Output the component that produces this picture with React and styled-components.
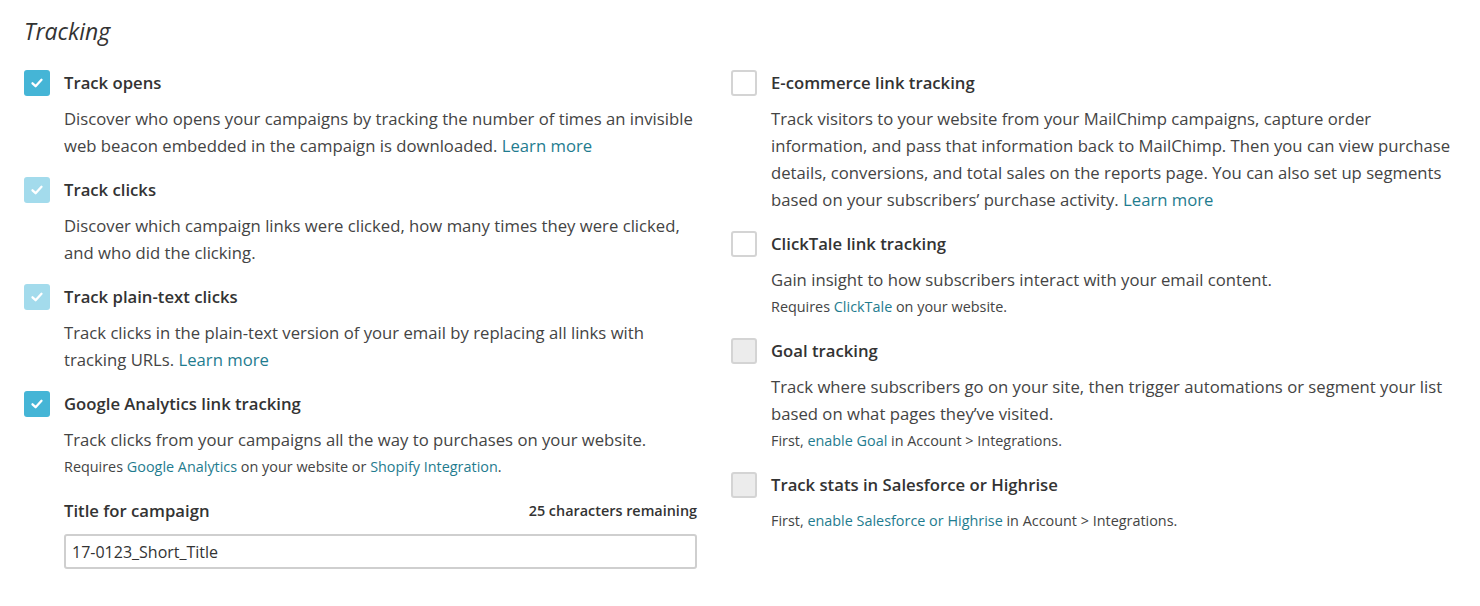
import React from 'react';
import styled, { createGlobalStyle } from 'styled-components';

const GlobalStyle = createGlobalStyle`
  body {
    margin: 0;
    background: #fff;
    font-family: "Open Sans", "Noto Sans", sans-serif;
    color: #333;
  }
`

const Page = styled.div`
  width: 1480px;
  height: 606px;
  padding: 15px 24px 0 24px;
  box-sizing: border-box;
`

const Heading = styled.h2`
  margin: 0;
  font-size: 23px;
  line-height: 33px;
  font-style: italic;
  font-weight: 400;
  color: #333;
`

const Columns = styled.div`
  display: grid;
  grid-template-columns: 673px 727px;
  column-gap: 34px;
  margin-top: 22px;
`

const Column = styled.div`
  display: flex;
  flex-direction: column;
  gap: 18px;
`

const Option = styled.div`
  display: grid;
  grid-template-columns: 40px 1fr;
`

const Box = styled.span`
  width: 26px;
  height: 26px;
  box-sizing: border-box;
  border-radius: 3px;
  display: flex;
  align-items: center;
  justify-content: center;
  background: ${p => p.$state === 'on' ? '#45b5d6' : p.$state === 'locked' ? '#a3dbec' : p.$state === 'off' ? '#fff' : '#ececec'};
  border: ${p => p.$state === 'on' || p.$state === 'locked' ? 'none' : '2px solid #d4d4d4'};
`

const Label = styled.div`
  font-size: 16.7px;
  font-weight: 600;
  line-height: 26px;
  color: #333;
`

const Body = styled.div`
  grid-column: 2;
  margin-top: 9px;
`

const Text = styled.p`
  margin: 0;
  font-size: 16.7px;
  line-height: 27px;
  color: #444;
`

const Note = styled.p`
  margin: 0;
  font-size: 14.4px;
  line-height: 27px;
  color: #444;
`

const A = styled.a`
  color: #1f7c8f;
  text-decoration: none;
`

const Field = styled.div`
  grid-column: 2;
  margin-top: 17px;
`

const FieldHead = styled.div`
  display: flex;
  justify-content: space-between;
  align-items: center;
  height: 26px;
`

const FieldLabel = styled.label`
  font-size: 16.7px;
  font-weight: 600;
  color: #333;
`

const Counter = styled.span`
  font-size: 14.4px;
  font-weight: 600;
  color: #333;
`

const Input = styled.input`
  display: block;
  width: 100%;
  height: 35px;
  margin-top: 11px;
  box-sizing: border-box;
  border: 2px solid #cfcfcf;
  border-radius: 3px;
  padding: 0 6px;
  font-family: "Open Sans", sans-serif;
  font-size: 16px;
  color: #333;
  outline: none;
`

const Check = () => (
  <svg width="14" height="14" viewBox="0 0 14 14">
    <path d="M2.5 7.3 L5.6 10.2 L11.5 3.8" fill="none" stroke="#fff" strokeWidth="2.3" strokeLinecap="round" strokeLinejoin="round" />
  </svg>
)

const Item = ({ state, label, children, extra }) => (
  <Option>
    <Box $state={state}>{(state === 'on' || state === 'locked') && <Check />}</Box>
    <Label>{label}</Label>
    {children && <Body>{children}</Body>}
    {extra}
  </Option>
)

export default function App() {
  return (
    <Page>
      <GlobalStyle />
      <Heading>Tracking</Heading>
      <Columns>
        <Column>
          <Item state="on" label="Track opens">
            <Text>Discover who opens your campaigns by tracking the number of times an invisible web beacon embedded in the campaign is downloaded. <A href="#">Learn more</A></Text>
          </Item>
          <Item state="locked" label="Track clicks">
            <Text>Discover which campaign links were clicked, how many times they were clicked, and who did the clicking.</Text>
          </Item>
          <Item state="locked" label="Track plain-text clicks">
            <Text>Track clicks in the plain-text version of your email by replacing all links with tracking URLs. <A href="#">Learn more</A></Text>
          </Item>
          <Item
            state="on"
            label="Google Analytics link tracking"
            extra={
              <Field>
                <FieldHead>
                  <FieldLabel>Title for campaign</FieldLabel>
                  <Counter>25 characters remaining</Counter>
                </FieldHead>
                <Input defaultValue="17-0123_Short_Title" />
              </Field>
            }
          >
            <Text>Track clicks from your campaigns all the way to purchases on your website.</Text>
            <Note>Requires <A href="#">Google Analytics</A> on your website or <A href="#">Shopify Integration</A>.</Note>
          </Item>
        </Column>
        <Column>
          <Item state="off" label="E-commerce link tracking">
            <Text>Track visitors to your website from your MailChimp campaigns, capture order information, and pass that information back to MailChimp. Then you can view purchase details, conversions, and total sales on the reports page. You can also set up segments based on your subscribers’ purchase activity. <A href="#">Learn more</A></Text>
          </Item>
          <Item state="off" label="ClickTale link tracking">
            <Text>Gain insight to how subscribers interact with your email content.</Text>
            <Note>Requires <A href="#">ClickTale</A> on your website.</Note>
          </Item>
          <Item state="disabled" label="Goal tracking">
            <Text>Track where subscribers go on your site, then trigger automations or segment your list based on what pages they’ve visited.</Text>
            <Note>First, <A href="#">enable Goal</A> in Account &gt; Integrations.</Note>
          </Item>
          <Item state="disabled" label="Track stats in Salesforce or Highrise">
            <Note>First, <A href="#">enable Salesforce or Highrise</A> in Account &gt; Integrations.</Note>
          </Item>
        </Column>
      </Columns>
    </Page>
  );
}
